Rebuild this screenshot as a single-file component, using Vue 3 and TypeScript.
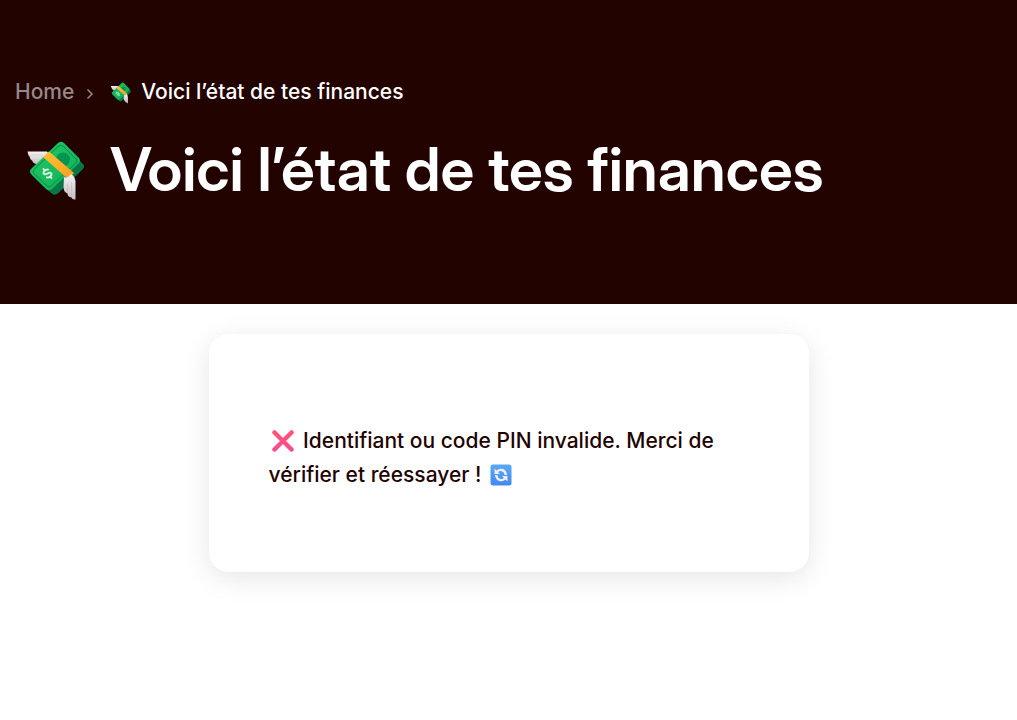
<script setup lang="ts">
const title: string = 'Voici l’état de tes finances'
</script>

<template>
  <div class="page">
    <svg class="defs" aria-hidden="true">
      <defs>
        <linearGradient id="green" x1="0" y1="0" x2="1" y2="1">
          <stop offset="0" stop-color="#21c763" /><stop offset="1" stop-color="#0fb258" />
        </linearGradient>
        <linearGradient id="band" x1="0" y1="0" x2="1" y2="1">
          <stop offset="0" stop-color="#ffc233" /><stop offset="1" stop-color="#ff9c1f" />
        </linearGradient>
        <linearGradient id="wing" x1="0" y1="0" x2="0" y2="1">
          <stop offset="0" stop-color="#f4f2f3" /><stop offset="1" stop-color="#c5bfc2" />
        </linearGradient>
        <linearGradient id="pink" x1="0" y1="0" x2="0" y2="1">
          <stop offset="0" stop-color="#ff5577" /><stop offset="1" stop-color="#fa4a91" />
        </linearGradient>
        <linearGradient id="blue" x1="0" y1="0" x2="0" y2="1">
          <stop offset="0" stop-color="#5aa9f3" /><stop offset="1" stop-color="#4489f0" />
        </linearGradient>
        <symbol id="money" viewBox="10 10 62 62">
          <path d="M12.500 21.500H32L38 29 27 35 22 34Q18 33.500 17.500 31Q15 30 14.500 26.500 13 25 12.500 21.500Z" fill="url(#wing)" />
          <path d="M14.500 25H28M17 29.500H26" fill="none" stroke="#ccc7ca" stroke-width=".5" />
          <path d="M17 43 49 15 68 34Q70 36 68 39L43 63.500Q39 66 36 63L17 45Z" fill="#087647" />
          <path d="M16 39 43 13Q46 10.500 49 13L64 28Q66 30.500 64 33L37 59Q34 61.500 31 59L16 44Q14 41.500 16 39Z" fill="url(#green)" />
          <path d="M19 39.500 43 16.500Q46 14 48.500 16.500L61 29Q63 31 61 33L36 56Q34 58 32 56L19 43.500Q17.500 41.500 19 39.500Z" fill="none" stroke="#078447" stroke-width=".9" />
          <circle cx="48" cy="29.500" r="7" fill="#079451" />
          <path d="M28 27 34 21.500 59 43 53 49Z" fill="url(#band)" />
          <path d="M3 -2.500C2 -4.500 -3 -4.500 -3 -2 -3 .5 3 -.5 3 2 3 4.500 -2.500 4.500 -3 2.300M0 -6V-4M0 4V6" transform="translate(32.500 43.500) rotate(-42)" fill="none" stroke="#e5f6e8" stroke-width="1.800" stroke-linecap="round" />
          <path d="M49 47Q53 48.500 56 44Q61 47 60.500 54V69.500Q57 70 56.500 67.500Q52.500 67 52.500 63.500Q48.500 62 48.500 57Z" fill="url(#wing)" />
          <path d="M52.500 54V62M56.500 52V66" fill="none" stroke="#b9b2b6" stroke-width=".5" />
        </symbol>
      </defs>
    </svg>
    <header class="hero">
      <nav class="crumbs" aria-label="Breadcrumb">
        <a href="#">Home</a>
        <svg class="chevron" viewBox="0 0 8 12" aria-hidden="true"><path d="M1.500 1.500 6 6 1.500 10.500" /></svg>
        <svg class="small-money" aria-hidden="true"><use href="#money" /></svg>
        <span>{{ title }}</span>
      </nav>
      <h1><svg class="big-money" aria-hidden="true"><use href="#money" /></svg><span>{{ title }}</span></h1>
    </header>
    <main>
      <section class="card">
        <p>
          <svg class="icon cross" viewBox="0 0 22 22" role="img" aria-label="Erreur"><path d="M2.500 2.500 19.500 19.500M19.500 2.500 2.500 19.500" fill="none" stroke="url(#pink)" stroke-width="4.500" stroke-linecap="round" /></svg>
          Identifiant ou code PIN invalide. Merci de vérifier et réessayer !
          <svg class="icon refresh" viewBox="0 0 22 22" role="img" aria-label="Actualiser">
            <rect x=".5" y=".5" width="21" height="21" rx="2.500" fill="url(#blue)" />
            <path d="M7 7.500Q9 5.500 12 6 15.500 7 15.800 11M15 14.500Q13 16.500 10 16 6.500 15 6.200 11" fill="none" stroke="#f2eefc" stroke-width="2.400" />
            <path d="M4.500 4.500V10H10ZM17.500 17.500V12H12Z" fill="#f2eefc" />
          </svg>
        </p>
      </section>
    </main>
  </div>
</template>

<style>
body { margin: 0; background: #fff; }
</style>
<style scoped>
.page { font-family: Inter, sans-serif; font-weight: 500; color: #220300; }
.defs { position: absolute; width: 0; height: 0; }
.hero { background: #220300; color: #fff; padding: 75px 15px 97px; }
.crumbs { display: flex; align-items: center; font-size: 21px; line-height: 34px; }
.crumbs a { color: #978a89; text-decoration: none; }
.chevron { width: 8px; height: 12px; margin: 4px 16px 0 12px; fill: none; stroke: #978a89; stroke-width: 1.5; }
.small-money { width: 22px; height: 22px; margin: 2px 9px 0 0; }
h1 { display: flex; align-items: center; margin: 23px 0 0; font-family: "Inter Display", Inter, sans-serif; font-size: 61px; line-height: 75px; font-weight: 600; }
.big-money { flex: none; width: 62px; height: 62px; margin: 2px 23px 0 10px; }
main { padding: 30px 15px; }
.card { box-sizing: border-box; max-width: 600px; margin: 0 auto; padding: 90px 60px 80px; border-radius: 20px; box-shadow: 0 6px 28px rgba(0, 0, 0, .1); }
p { margin: 0; font-size: 21px; line-height: 34px; }
.icon { width: 22px; height: 22px; vertical-align: -4px; }
.cross { margin: 0 4px 0 3px; }
.refresh { margin-left: 3px; }
</style>
